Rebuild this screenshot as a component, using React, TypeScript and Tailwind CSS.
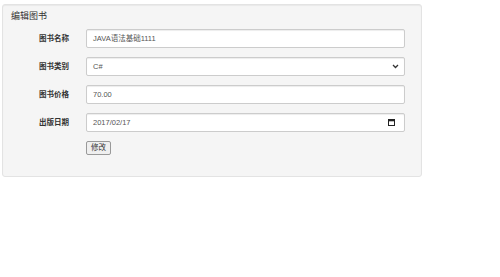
import React from "react";

const font = { fontFamily: '"Liberation Sans", "Noto Sans CJK SC", sans-serif' };

const Field = ({ label, children }: { label: string; children: React.ReactNode }) => (
  <div className="flex items-center">
    <label className="w-[66px] shrink-0 text-right text-[7.5px] font-bold text-[#333]">{label}</label>
    <div className="ml-[17px] w-[319px]">{children}</div>
  </div>
);

const boxCls =
  "flex h-[19px] w-full items-center rounded-[2px] border border-[#ccc] bg-white px-[6px] text-[7.5px] text-[#555] shadow-[inset_0_1px_1px_rgba(0,0,0,0.075)]";

export default function App() {
  return (
    <div className="h-[277px] w-[500px] bg-white pl-[2px] pt-[4px]" style={font}>
      <div className="h-[173px] w-[420px] rounded-[3px] border border-[#e3e3e3] bg-[#f5f5f5] shadow-[inset_0_1px_1px_rgba(0,0,0,0.05)]">
        <div className="pl-[8px] pt-[6px] text-[9px] leading-[11px] text-[#333]">编辑图书</div>
        <form className="mt-[7px] flex flex-col gap-[9px]">
          <Field label="图书名称">
            <div className={boxCls}>JAVA语法基础1111</div>
          </Field>
          <Field label="图书类别">
            <div className={boxCls + " justify-between"}>
              <span>C#</span>
              <svg width="7" height="5" viewBox="0 0 7 5" className="mr-[-1px]">
                <path d="M1 1 L3.5 3.5 L6 1" fill="none" stroke="#333" strokeWidth="1.3" />
              </svg>
            </div>
          </Field>
          <Field label="图书价格">
            <div className={boxCls}>70.00</div>
          </Field>
          <Field label="出版日期">
            <div className={boxCls + " justify-between"}>
              <span>2017/02/17</span>
              <svg width="7" height="7" viewBox="0 0 7 7" className="mr-[3px]">
                <rect x="0.5" y="0.5" width="6" height="6" fill="none" stroke="#222" strokeWidth="1" />
                <rect x="0.5" y="0.5" width="6" height="1.8" fill="#222" />
              </svg>
            </div>
          </Field>
          <div className="flex pl-[83px]">
            <button
              type="button"
              className="flex h-[14px] w-[25px] items-center justify-center rounded-[2px] border border-[#999] bg-[#efefef] text-[7.5px] leading-none text-[#333]"
            >
              修改
            </button>
          </div>
        </form>
      </div>
    </div>
  );
}
